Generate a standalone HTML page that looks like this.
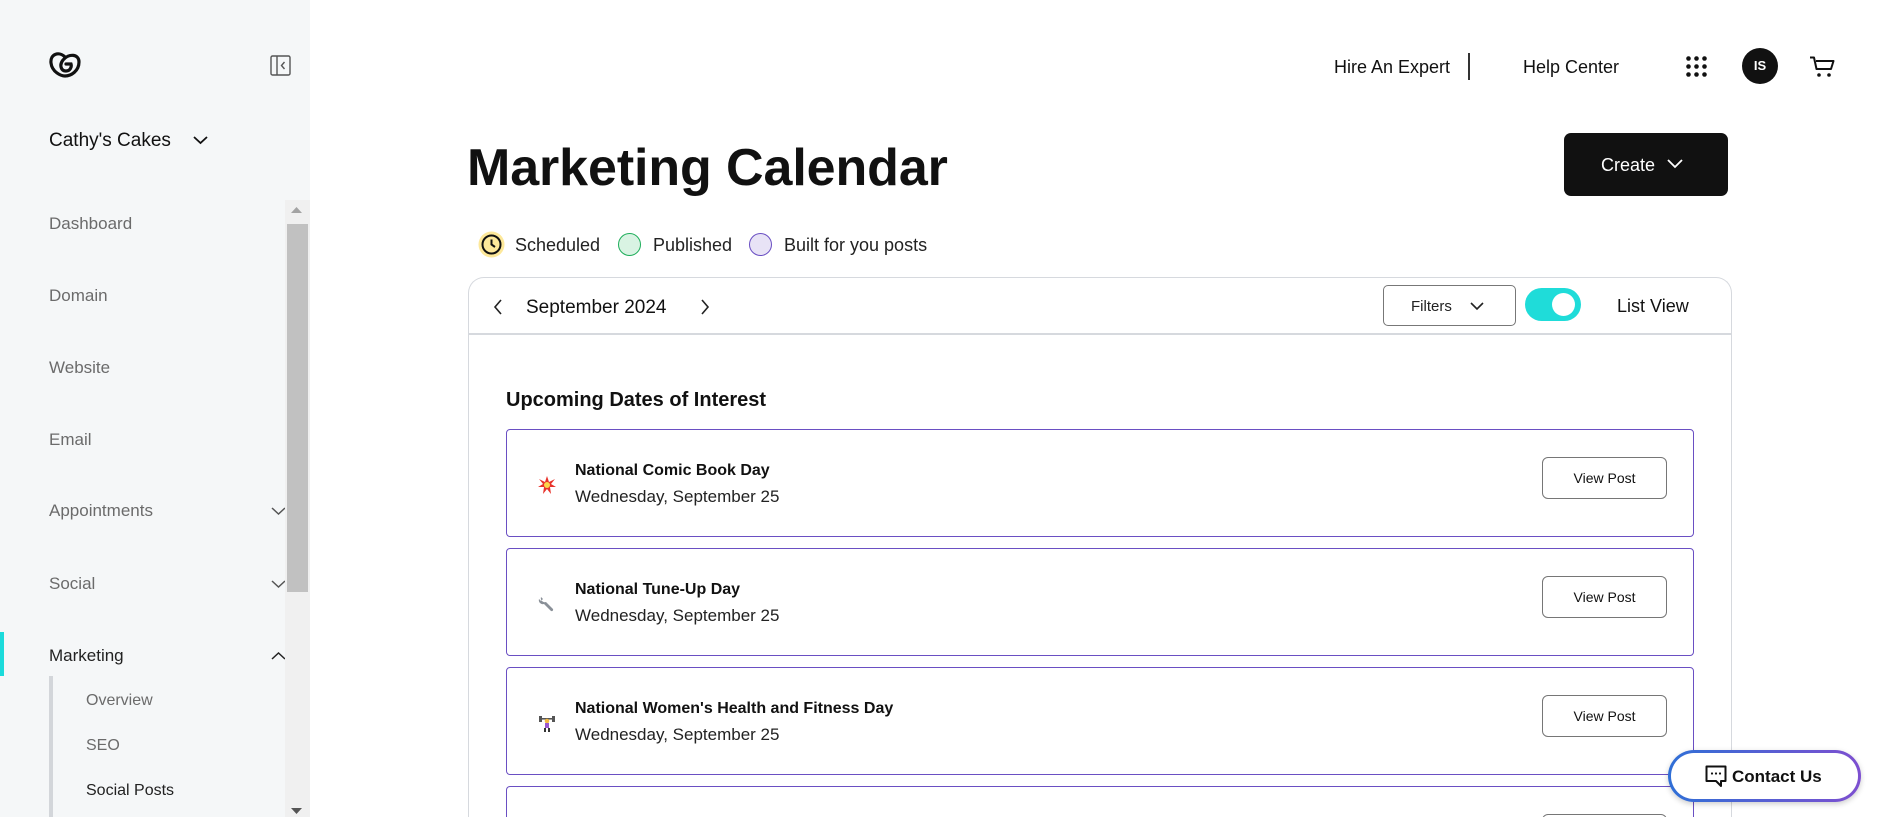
<!DOCTYPE html>
<html><head><meta charset="utf-8">
<style>
*{margin:0;padding:0;box-sizing:border-box}
html,body{width:1888px;height:817px;overflow:hidden}
body{background:#fff;font-family:"Liberation Sans",Arial,sans-serif;color:#111}
#wrap{position:relative;width:1888px;height:817px;overflow:hidden}
.abs{position:absolute}
#side{position:absolute;left:0;top:0;width:310px;height:817px;background:#f5f7f8}
.nav{position:absolute;left:49px;font-size:17px;color:#6b6b6b;line-height:20px}
.chev{position:absolute}
.sub{position:absolute;left:86px;font-size:16px;color:#6b6b6b;line-height:20px}
.item{position:absolute;left:506px;width:1188px;height:108px;border:1.5px solid #6a4fc3;border-radius:4px;background:#fff}
.item .t{position:absolute;left:68px;top:32px;font-size:16px;font-weight:bold;color:#111}
.item .d{position:absolute;left:68px;top:57px;font-size:17px;color:#222}
.item .b{position:absolute;left:1035px;top:27px;width:125px;height:42px;border:1px solid #767676;border-radius:6px;font-size:14px;text-align:center;line-height:40px;color:#111}
.item .ic{position:absolute;left:30px;top:45px;width:20px;height:20px}
</style></head><body><div id="wrap">
<div id="side">
  <svg class="abs" style="left:49px;top:52px" width="32" height="26" viewBox="0 0 32 26"><path d="M16 5 C10 -1 1 2 2 11 C3 20 12 24 16 24 C22 24 30 19 30 10 C30 2 20 1 14 8 C10 13 12 19 17 19 C21 19 23 15 22 12 L17 12" fill="none" stroke="#111" stroke-width="3.2" stroke-linecap="round"/></svg>
  <svg class="abs" style="left:270px;top:55px" width="21" height="21" viewBox="0 0 21 21"><rect x="1" y="1" width="19" height="19" rx="1.5" fill="none" stroke="#555" stroke-width="1.4"/><line x1="7" y1="1" x2="7" y2="20" stroke="#555" stroke-width="1.4"/><path d="M14.5 7 L11.5 10.5 L14.5 14" fill="none" stroke="#555" stroke-width="1.4"/></svg>
  <div class="abs" style="left:49px;top:130px;font-size:19px;color:#111">Cathy's Cakes</div>
  <svg class="abs" style="left:193px;top:135px" width="15" height="10" viewBox="0 0 15 10"><path d="M1 2 L7.5 8 L14 2" fill="none" stroke="#111" stroke-width="1.8"/></svg>
  <div class="nav" style="top:214px">Dashboard</div>
  <div class="nav" style="top:286px">Domain</div>
  <div class="nav" style="top:358px">Website</div>
  <div class="nav" style="top:430px">Email</div>
  <div class="nav" style="top:501px">Appointments</div>
  <div class="nav" style="top:574px">Social</div>
  <div class="nav" style="top:646px;color:#222">Marketing</div>
  <svg class="chev" style="left:271px;top:506px" width="15" height="10" viewBox="0 0 15 10"><path d="M1 2 L7.5 8 L14 2" fill="none" stroke="#555" stroke-width="1.5"/></svg>
  <svg class="chev" style="left:271px;top:579px" width="15" height="10" viewBox="0 0 15 10"><path d="M1 2 L7.5 8 L14 2" fill="none" stroke="#555" stroke-width="1.5"/></svg>
  <svg class="chev" style="left:271px;top:651px" width="15" height="10" viewBox="0 0 15 10"><path d="M1 8 L7.5 2 L14 8" fill="none" stroke="#222" stroke-width="1.5"/></svg>
  <div class="abs" style="left:0;top:632px;width:4px;height:44px;background:#1bdbdb"></div>
  <div class="abs" style="left:49px;top:676px;width:4px;height:141px;background:#d3d6da"></div>
  <div class="sub" style="top:691px">Overview</div>
  <div class="sub" style="top:736px">SEO</div>
  <div class="sub" style="top:781px;color:#222">Social Posts</div>
  <div class="abs" style="left:285px;top:200px;width:25px;height:617px;background:#f0f0f0"></div>
  <div class="abs" style="left:287px;top:224px;width:21px;height:368px;background:#c1c1c1"></div>
  <svg class="abs" style="left:291px;top:207px" width="11" height="7"><path d="M0 6 L5.5 0 L11 6Z" fill="#a3a3a3"/></svg>
  <svg class="abs" style="left:291px;top:808px" width="11" height="7"><path d="M0 0 L5.5 6 L11 0Z" fill="#555"/></svg>
</div>

<div class="abs" style="left:1334px;top:57px;font-size:18px;color:#111">Hire An Expert</div>
<div class="abs" style="left:1468px;top:53px;width:1.5px;height:27px;background:#333"></div>
<div class="abs" style="left:1523px;top:57px;font-size:18px;color:#111">Help Center</div>
<svg class="abs" style="left:1686px;top:56px" width="21" height="21" viewBox="0 0 21 21" fill="#111"><circle cx="2.5" cy="2.5" r="2.3"/><circle cx="10.5" cy="2.5" r="2.3"/><circle cx="18.5" cy="2.5" r="2.3"/><circle cx="2.5" cy="10.5" r="2.3"/><circle cx="10.5" cy="10.5" r="2.3"/><circle cx="18.5" cy="10.5" r="2.3"/><circle cx="2.5" cy="18.5" r="2.3"/><circle cx="10.5" cy="18.5" r="2.3"/><circle cx="18.5" cy="18.5" r="2.3"/></svg>
<div class="abs" style="left:1742px;top:48px;width:36px;height:36px;border-radius:50%;background:#111;color:#fff;font-weight:bold;font-size:13px;text-align:center;line-height:36px">IS</div>
<svg class="abs" style="left:1809px;top:56px" width="27" height="22" viewBox="0 0 27 22"><path d="M1 1.5 H5 L7.5 13 H22 L24.5 5 H7" fill="none" stroke="#111" stroke-width="2" stroke-linejoin="round"/><circle cx="10" cy="19" r="1.8" fill="#111"/><circle cx="20" cy="19" r="1.8" fill="#111"/></svg>

<div class="abs" style="left:467px;top:138px;font-size:52px;font-weight:bold;color:#111;letter-spacing:-0.1px">Marketing Calendar</div>
<div class="abs" style="left:1564px;top:133px;width:164px;height:63px;background:#111;border-radius:7px;color:#fff;font-size:18px"><span class="abs" style="left:37px;top:22px">Create</span><svg class="abs" style="left:103px;top:26px" width="16" height="10"><path d="M1 1 L8 8 L15 1" fill="none" stroke="#fff" stroke-width="1.8"/></svg></div>

<svg class="abs" style="left:478px;top:231px" width="27" height="27" viewBox="0 0 27 27"><circle cx="13.5" cy="13.5" r="13" fill="#fde89a"/><circle cx="13.5" cy="13.5" r="9" fill="none" stroke="#111" stroke-width="2"/><path d="M13.5 8.5 V13.5 L17 16" fill="none" stroke="#111" stroke-width="2"/></svg>
<div class="abs" style="left:515px;top:235px;font-size:18px;color:#222">Scheduled</div>
<div class="abs" style="left:618px;top:233px;width:23px;height:23px;border-radius:50%;background:#d9f3e3;border:1.5px solid #1fae5b"></div>
<div class="abs" style="left:653px;top:235px;font-size:18px;color:#222">Published</div>
<div class="abs" style="left:749px;top:233px;width:23px;height:23px;border-radius:50%;background:#e8e3f6;border:1.5px solid #6a4fc3"></div>
<div class="abs" style="left:784px;top:235px;font-size:18px;color:#222">Built for you posts</div>

<div class="abs" style="left:468px;top:277px;width:1264px;height:540px;border:1.5px solid #d6d9de;border-bottom:none;border-radius:16px 16px 0 0;background:#fff"></div>
<div class="abs" style="left:469px;top:333px;width:1262px;height:1.5px;background:#d6d9de"></div>
<svg class="abs" style="left:493px;top:299px" width="10" height="16"><path d="M8 1 L2 8 L8 15" fill="none" stroke="#222" stroke-width="1.6"/></svg>
<div class="abs" style="left:526px;top:297px;font-size:19px;color:#111">September 2024</div>
<svg class="abs" style="left:700px;top:299px" width="10" height="16"><path d="M2 1 L8 8 L2 15" fill="none" stroke="#222" stroke-width="1.6"/></svg>
<div class="abs" style="left:1383px;top:285px;width:133px;height:41px;border:1px solid #777;border-radius:5px"><span class="abs" style="left:27px;top:12px;font-size:15px;color:#222">Filters</span><svg class="abs" style="left:86px;top:16px" width="14" height="9"><path d="M1 1 L7 7 L13 1" fill="none" stroke="#222" stroke-width="1.6"/></svg></div>
<div class="abs" style="left:1525px;top:288px;width:56px;height:33px;border-radius:17px;background:#1fdcd9"><div class="abs" style="left:27px;top:5px;width:23px;height:23px;border-radius:50%;background:#fff"></div></div>
<div class="abs" style="left:1617px;top:296px;font-size:18px;color:#111">List View</div>

<div class="abs" style="left:506px;top:389px;font-size:20px;font-weight:bold;color:#111">Upcoming Dates of Interest</div>

<div class="item" style="top:429px">
  <svg class="ic" viewBox="0 0 20 20"><path d="M10 1 L12 7 L18 4 L14 9 L19 12 L13 12 L14 19 L10 14 L6 19 L7 12 L1 12 L6 9 L2 4 L8 7Z" fill="#e8322a"/><circle cx="10" cy="10" r="3" fill="#fbd54a"/></svg>
  <div class="t">National Comic Book Day</div><div class="d">Wednesday, September 25</div><div class="b">View Post</div></div>
<div class="item" style="top:548px">
  <svg class="ic" viewBox="0 0 20 20"><path d="M4 3 a4 4 0 0 0 5 5 L16 15 a1.5 1.5 0 0 1 -2 2 L7 10 a4 4 0 0 1 -5 -5 L4 7 L6 5Z" fill="#8a9098"/></svg>
  <div class="t">National Tune-Up Day</div><div class="d">Wednesday, September 25</div><div class="b">View Post</div></div>
<div class="item" style="top:667px">
  <svg class="ic" viewBox="0 0 20 20"><rect x="2" y="3" width="3" height="6" fill="#555"/><rect x="15" y="3" width="3" height="6" fill="#555"/><rect x="4" y="5" width="12" height="1.6" fill="#555"/><circle cx="10" cy="8" r="2.3" fill="#f4b942"/><rect x="8" y="10" width="4" height="5" fill="#9b59d0"/><rect x="7" y="15" width="2" height="4" fill="#333"/><rect x="11" y="15" width="2" height="4" fill="#333"/></svg>
  <div class="t">National Women's Health and Fitness Day</div><div class="d">Wednesday, September 25</div><div class="b">View Post</div></div>
<div class="item" style="top:786px;height:31px;border-bottom:none;border-radius:4px 4px 0 0;overflow:hidden"><div class="b">View Post</div></div>

<div class="abs" style="left:1668px;top:750px;width:193px;height:52px;border-radius:26px;background:linear-gradient(90deg,#2f6fd6,#7d4fd0);padding:3px;box-shadow:0 2px 6px rgba(0,0,0,.2)"><div style="width:100%;height:100%;border-radius:23px;background:#fff;position:relative">
<svg class="abs" style="left:34px;top:12px" width="22" height="23" viewBox="0 0 22 23"><path d="M1.5 1.5 H20.5 V16 H16 V21 L11 16 H1.5Z" fill="none" stroke="#111" stroke-width="2" stroke-linejoin="round"/><circle cx="7" cy="8.5" r="1.1" fill="#111"/><circle cx="11" cy="8.5" r="1.1" fill="#111"/><circle cx="15" cy="8.5" r="1.1" fill="#111"/></svg>
<span class="abs" style="left:61px;top:14px;font-size:17px;font-weight:bold;color:#111">Contact Us</span></div></div>
</div></body></html>
